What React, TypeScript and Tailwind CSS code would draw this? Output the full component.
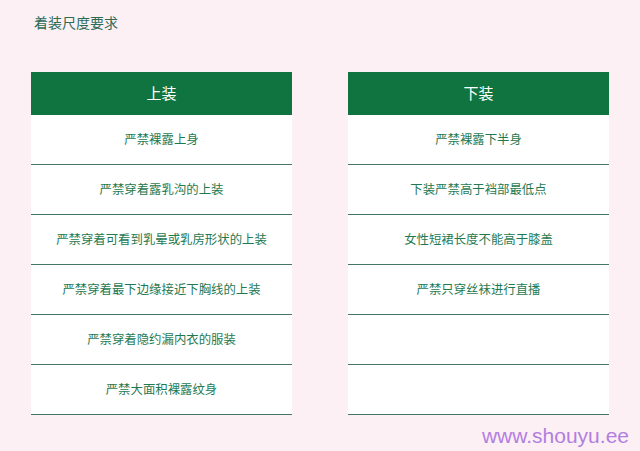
import React from 'react';

const upper = [
  '严禁裸露上身',
  '严禁穿着露乳沟的上装',
  '严禁穿着可看到乳晕或乳房形状的上装',
  '严禁穿着最下边缘接近下胸线的上装',
  '严禁穿着隐约漏内衣的服装',
  '严禁大面积裸露纹身',
];

const lower = [
  '严禁裸露下半身',
  '下装严禁高于裆部最低点',
  '女性短裙长度不能高于膝盖',
  '严禁只穿丝袜进行直播',
  '',
  '',
];

function RuleTable({ title, rows }: { title: string; rows: string[] }) {
  return (
    <div className="w-[261px] bg-white">
      <div className="h-[43px] bg-[#0f7440] flex items-center justify-center text-white text-[15px]">
        {title}
      </div>
      {rows.map((r, i) => (
        <div
          key={i}
          className="h-[50px] border-b border-[#457563] flex items-center justify-center text-[12.4px] text-[#1f7a52]"
        >
          {r}
        </div>
      ))}
    </div>
  );
}

export default function App() {
  return (
    <div
      className="relative w-[640px] h-[451px] bg-[#fcf0f5] overflow-hidden"
      style={{ fontFamily: '"Noto Sans CJK SC", "Liberation Sans", sans-serif' }}
    >
      <div className="pt-[12px] pl-[34px] text-[14px] leading-[20px] text-[#2d6b55]">着装尺度要求</div>
      <div className="flex gap-[56px] pl-[31px] pt-[40px]">
        <RuleTable title="上装" rows={upper} />
        <RuleTable title="下装" rows={lower} />
      </div>
      <div
        className="absolute right-[11px] bottom-[3px] text-[21px] leading-[24px] text-[#b27fe0]"
        style={{ fontFamily: '"Liberation Sans", Arial, sans-serif' }}
      >
        www.shouyu.ee
      </div>
    </div>
  );
}
